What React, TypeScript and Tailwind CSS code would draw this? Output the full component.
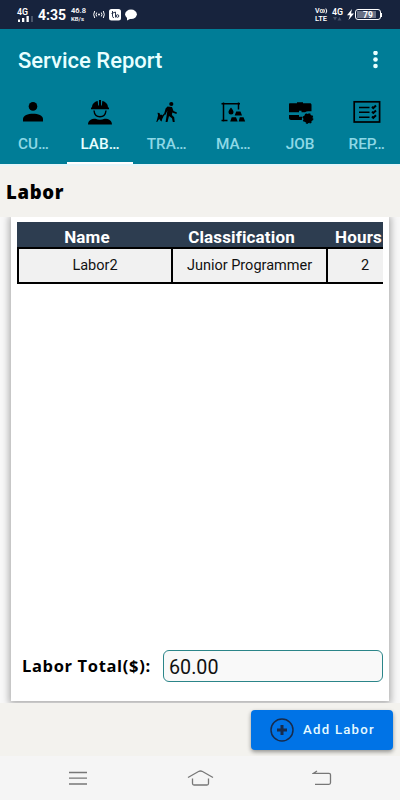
import type { ReactNode } from "react";

interface Tab {
  label: string;
  icon: ReactNode;
}

const tabs: Tab[] = [
  {
    label: "CU…",
    icon: (
      <svg className="h-6 w-7" viewBox="0 0 28 24">
        <circle cx="14" cy="6.400" r="4.300" />
        <path d="M4 21.500v-2.500c0-3.500 5-5.200 10-5.200s10 1.700 10 5.200v2.500z" />
      </svg>
    ),
  },
  {
    label: "LAB…",
    icon: (
      <svg className="h-7 w-7" viewBox="0 0 28 28">
        <path d="M6 9.500C6 6 8.500 3.800 11.700 3.100l.5 4.400h.8V2h2v5.500h.8l.5-4.400C19.500 3.800 22 6 22 9.500h1v1.800H5V9.500z" />
        <path d="M8 12.500c.4 4.300 2.700 6.300 6 6.300s5.600-2 6-6.300" fill="none" stroke="#000" strokeWidth="1.400" />
        <path d="M2 26.500c0-4 3-5.800 7.500-5.800 2.700 1.400 6.300 1.400 9 0 4.500 0 7.500 1.800 7.500 5.800z" />
      </svg>
    ),
  },
  {
    label: "TRA…",
    icon: (
      <svg className="h-6 w-6" viewBox="0 0 24 24">
        <circle cx="16.300" cy="4" r="2.100" />
        <path d="M12.500 6.500l4.500.5 1.500 4 3.500 1.600-.6 1.400-4.100-1.600-.4 2.600 2.300 2.300.5 4.700h-1.900l-.8-3.700-3-2.300-1.500 6h-1.900l1.200-7.700.6-3.900-1.900 4.300-1.500-.5 1.600-5.700z" />
        <path d="M3.300 14.500l3.700.2 1.400 2-1.200 2.300-.6 2.500-1.200-.8-.5-1.400-1.400.4-1.300 2.300H1.300l1-3.500zM2.500 12.800l2 .3.700 2-2 .8z" />
        <path d="M9.500 14L7 17" stroke="#000" strokeWidth="1.200" />
      </svg>
    ),
  },
  {
    label: "MA…",
    icon: (
      <svg className="h-6 w-7" viewBox="0 0 28 24">
        <path d="M2.500 3.800H21M4.500 2.500v19M2.500 20.500h6M19.500 2.500v7" fill="none" stroke="#000" strokeWidth="1.500" />
        <path d="M12 7.500c1.800 2.400 2.500 3.400 2.500 4.600a2.500 2.500 0 0 1-5 0c0-1.200.7-2.200 2.500-4.600z" />
        <path d="M17.200 11.500h4.300l1.500 4h-7.300zM12.700 17.200H17l1.700 4.300h-7.500zM20.800 17.200h3.700l1.700 4.300h-6.500z" />
      </svg>
    ),
  },
  {
    label: "JOB",
    icon: (
      <svg className="h-6 w-7" viewBox="0 0 28 24">
        <path d="M4 3.200h7V2.200h6v1h7c.8 0 1.500.7 1.500 1.500v6.500h-3.500c-1 0-2 .3-3 1h-3.500v-1.500h-2.500v1.500H3V4.200c0-.6.400-1 1-1z" />
        <path d="M3 15h10v1.800h3.500c-.6 1.100-.8 2.200-.6 3.200H5c-1.100 0-2-.9-2-2z" />
        <circle cx="22" cy="18.500" r="4.700" />
        <circle cx="22" cy="18.500" r="4.800" fill="none" stroke="#000" strokeWidth="1.200" strokeDasharray="1.900 1.870" />
      </svg>
    ),
  },
  {
    label: "REP…",
    icon: (
      <svg className="h-6 w-7" viewBox="0 0 28 24" fill="none" stroke="#000">
        <rect x="1.200" y="1.800" width="25.400" height="20.200" strokeWidth="1.700" />
        <path d="M6 7.500h10.500M6 12.300h10.500M6 17.200h10.500" strokeWidth="1.500" />
        <path d="M19 6.800l1.300 1.300 2.700-2.500M19 11.600l1.300 1.300 2.700-2.500M19 16.500l1.300 1.300 2.700-2.500" strokeWidth="2" />
      </svg>
    ),
  },
];

function StatusBar() {
  return (
    <div className="flex h-[29px] shrink-0 items-center bg-[#17233d] pl-[17px] pr-[18px] text-white">
      <div className="w-[18px]">
        <div className="text-[8.800px] leading-[8px] font-semibold">4G</div>
        <svg className="h-[6px] w-[17px]" viewBox="0 0 17 6" fill="#fff">
          <path d="M1 3.500h2V6H1zM5 2h2.300v4H5zM9.500 0h2.300v6H9.500z" />
          <path d="M14 0h2v6h-2z" fill="#4b5569" />
        </svg>
      </div>
      <span className="ml-[3px] w-[29px] pt-px text-[14px] leading-none font-bold">4:35</span>
      <div className="ml-[4px] w-[18px] font-semibold">
        <div className="text-[7.500px] leading-[8px]">46.8</div>
        <div className="text-[6px] leading-[7px] whitespace-nowrap">KB/s</div>
      </div>
      <svg className="ml-[4px] h-[9px] w-[12px]" viewBox="0 0 12 9" fill="none" stroke="#fff">
        <circle cx="6" cy="4.500" r="1" fill="#fff" stroke="none" />
        <path d="M3.700 2.500q-1.300 2 0 4M8.300 2.500q1.300 2 0 4M1.700 1q-2 3.500 0 7M10.300 1q2 3.500 0 7" />
      </svg>
      <svg className="ml-[4px] h-[12px] w-[12px]" viewBox="0 0 12 12">
        <rect width="12" height="11.500" rx="2.500" fill="#fff" />
        <path d="M3.500 2v5.500q0 1 1.500 1M2.500 4.500l4-1.500v5.500" fill="none" stroke="#17233d" strokeWidth=".9" />
        <circle cx="8.500" cy="7" r="1.300" fill="none" stroke="#17233d" strokeWidth=".9" />
      </svg>
      <svg className="ml-[4px] h-[12px] w-[12px]" viewBox="0 0 12 12" fill="#fff">
        <ellipse cx="6" cy="5.300" rx="5.900" ry="4.800" />
        <path d="M2 7.500v4l4-2z" />
      </svg>
      <div className="ml-auto w-[15px] font-semibold">
        <div className="flex items-center">
          <span className="text-[7px] leading-[8px]">Vo</span>
          <svg className="h-[6px] w-[5px]" viewBox="0 0 5 6" fill="none" stroke="#fff">
            <path d="M.7 1q1.500 2 0 4M2.800.5q2 2.500 0 5" />
          </svg>
        </div>
        <div className="text-[7.500px] leading-[8px]">LTE</div>
      </div>
      <div className="ml-[2px] w-[12px] text-[8.800px] leading-[8px] font-semibold">
        4G
        <svg className="h-[5px] w-[10px]" viewBox="0 0 10 5" fill="#465169">
          <path d="M1 1h4L3 4.500zM5.500 4.500h4l-2-3.500z" />
        </svg>
      </div>
      <svg className="ml-[3px] h-[11px] w-[7px]" viewBox="0 0 7 11" fill="#fff">
        <path d="M5 0L0 6.200h3L1.500 11 7 4.500H4z" />
      </svg>
      <div className="ml-[1px] flex h-[11px] w-[26px] items-center rounded-[3px] border border-white p-px">
        <div className="h-full w-[19px] bg-[#697184] pl-[6px] text-[8.500px] leading-[8px] font-bold">79</div>
      </div>
      <div className="h-[4px] w-px bg-white" />
    </div>
  );
}

function TabBar() {
  return (
    <div className="grid h-[74px] shrink-0 grid-cols-6">
      {tabs.map((tab, i) => (
        <div
          key={tab.label}
          className={`flex flex-col items-center border-b-2 ${
            i === 1 ? "border-white text-[#e8ffff]" : "border-transparent text-[#8ed8e6]"
          }`}
        >
          <div className="flex h-[44px] items-center">{tab.icon}</div>
          <span className="text-[15.300px] leading-[20px] font-medium">{tab.label}</span>
        </div>
      ))}
    </div>
  );
}

function LaborTable() {
  return (
    <div className="h-[62px] w-[366px] overflow-hidden">
      <div className="flex h-[25px] w-[387px] bg-[#2d3d50] text-[17px] leading-[30px] font-bold tracking-[0.150px] text-white">
        <div className="w-[156px] pr-[16px] text-center">Name</div>
        <div className="w-[154px] pr-[17px] text-center">Classification</div>
        <div className="w-[77px] pr-[14px] text-center">Hours</div>
      </div>
      <div className="flex h-[37px] w-[387px] border-2 border-black bg-[#f1f1f1] text-[14.500px] leading-[33px] text-[#111]">
        <div className="w-[154px] border-r-2 border-black text-center">Labor2</div>
        <div className="w-[155px] border-r-2 border-black text-center">Junior Programmer</div>
        <div className="w-[74px] text-center">2</div>
      </div>
    </div>
  );
}

export default function App() {
  return (
    <div className="flex h-[800px] w-[400px] flex-col overflow-hidden bg-[#f3f2ee] font-[Roboto,sans-serif]">
      <StatusBar />

      <header className="shrink-0 bg-[#007d97]">
        <div className="flex h-[61px] items-center justify-between pr-[22px] pl-[18px]">
          <h1 className="pt-px text-[22px] font-medium text-[#e8ffff]">Service Report</h1>
          <svg className="h-[18px] w-[5px]" viewBox="0 0 5 18" fill="#e8ffff">
            <circle cx="2.500" cy="2" r="2.300" />
            <circle cx="2.500" cy="8.500" r="2.300" />
            <circle cx="2.500" cy="15" r="2.300" />
          </svg>
        </div>
        <TabBar />
      </header>

      <h2 className="h-[53px] shrink-0 border-t-2 border-[#e5f5f8] pl-[6px] font-['Open_Sans',sans-serif] text-[18.500px] leading-[52px] font-extrabold tracking-[0.700px] text-black">
        Labor
      </h2>

      <main className="h-[486px] shrink-0 overflow-hidden bg-[#f8f8f8] px-[11px]">
        <div className="flex h-[484px] flex-col justify-between bg-white px-[6px] pt-[5px] pb-[19px] shadow-[0_1px_7px_2px_rgba(0,0,0,0.3)]">
          <LaborTable />
          <div className="flex items-center">
            <span className="w-[146px] pt-px pl-[5px] font-['Open_Sans',sans-serif] text-[16.500px] font-bold tracking-[0.650px] whitespace-nowrap text-black">
              Labor Total($):
            </span>
            <div className="h-[32px] w-[220px] rounded-[6px] border border-[#2b8589] bg-[#f9f9f9] pl-[5px] text-[19.700px] leading-[33px] text-[#111]">
              60.00
            </div>
          </div>
        </div>
      </main>

      <div className="flex h-[53px] shrink-0 justify-end overflow-hidden pt-[7px] pr-[7px]">
        <button className="flex h-[40px] w-[142px] items-center rounded-[4px] bg-[#0073e6] pl-[19px] text-[13.200px] font-medium tracking-[1.250px] text-[#e5faff] shadow-[0_2px_4px_rgba(0,0,0,0.4)]">
          <svg className="mr-[9px] h-[24px] w-[24px]" viewBox="0 0 24 24" fill="none" stroke="#172b4b">
            <circle cx="12" cy="12" r="11" strokeWidth="1.500" />
            <path d="M12 7v10M7 12h10" strokeWidth="3" />
          </svg>
          Add Labor
        </button>
      </div>

      <nav className="flex h-[44px] shrink-0 items-center bg-[#f5f5f5] pl-[68px]">
        <svg className="h-[16px] w-[20px]" viewBox="0 0 20 16" stroke="#777" strokeWidth="1.300">
          <path d="M1 2.500h18M1 8.200h18M1 14h18" />
        </svg>
        <svg className="ml-[99px] h-[18px] w-[27px]" viewBox="0 0 27 18" fill="none" stroke="#777" strokeWidth="1.300">
          <path d="M1 8.500L11.500 2.500q2-1 4 0L26 8.500M5.500 9.500v5q0 1.500 1.500 1.500h4.500M16 16h4q1.500 0 1.500-1.500v-5M11 16h5.500" />
        </svg>
        <svg className="ml-[98px] h-[16px] w-[20px]" viewBox="0 0 20 16" fill="none" stroke="#777" strokeWidth="1.300">
          <path d="M5 1L1.500 3.300H17q1.500 0 1.500 1.500v8q0 1.500-1.500 1.500H3" />
        </svg>
      </nav>
    </div>
  );
}
